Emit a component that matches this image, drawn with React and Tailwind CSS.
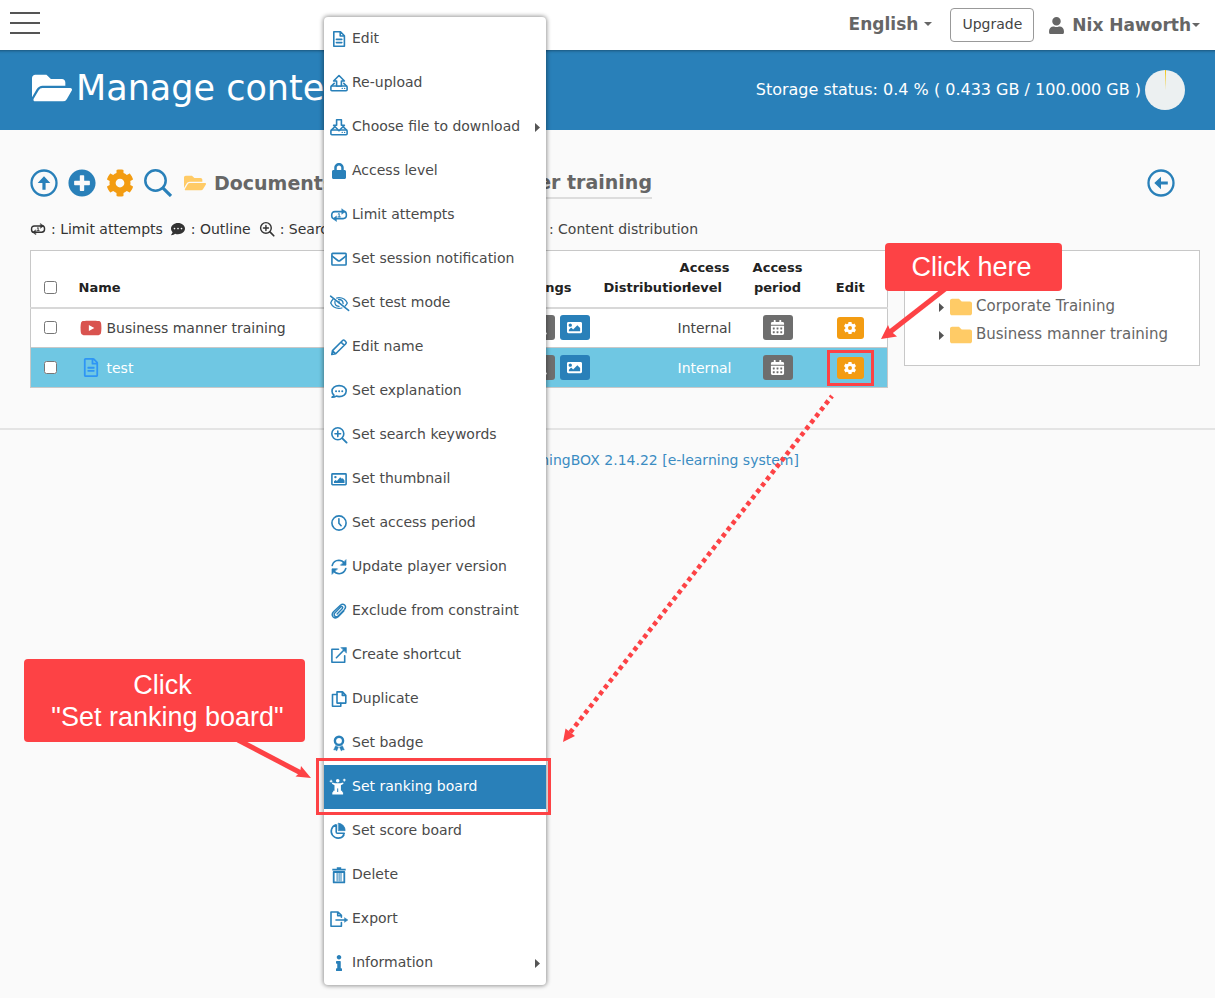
import React from "react";
import { FaFolderOpen, FaFolder, FaUser, FaCog, FaYoutube, FaRegFileAlt, FaLock, FaCommentDots, FaImage, FaCalendarAlt, FaPlusCircle, FaInfo, FaSearch } from "react-icons/fa";

function Svg({ children, className = "h-[18px] w-[18px]", box = "0 0 18 18" }) {
  return (
    <svg aria-hidden="true" viewBox={box} className={"shrink-0 overflow-visible " + className} fill="none" stroke="currentColor" strokeWidth="1.6" strokeLinecap="round" strokeLinejoin="round">
      {children}
    </svg>
  );
}

const FileIcon = () => (
  <Svg>
    <path d="M3.8 1.8h6.7l3.9 3.9v10.5H3.8z M10.2 2v4h4" />
    <path d="M6.4 9.4h5.4M6.4 12.6h5.4" />
  </Svg>
);
const TrayBase = () => (
  <>
    <path d="M4.2 9.300 1.400 12M13.800 9.300 16.600 12" />
    <rect x="0.900" y="12" width="16.200" height="4.700" rx="1" />
    <path d="M12.200 14.400h.1M14.600 14.400h.1" strokeWidth="1.300" />
  </>
);
const UploadIcon = () => (
  <Svg>
    <TrayBase />
    <path d="M9 1.500 3.600 7h3v5h4.800V7h3z" fill="#fff" />
  </Svg>
);
const DownloadIcon = () => (
  <Svg>
    <TrayBase />
    <path d="M9 12.800 3.600 7.300h3V1.800h4.800v5.500h3z" fill="#fff" />
  </Svg>
);
const LockIcon = () => <FaLock className="h-4 w-[18px] shrink-0" />;
const LimitIcon = ({ className }) => (
  <Svg className={className}>
    <path d="M4.500 12.800Q1.700 12.800 1.700 9.200T5 5.600h8.200M13.500 5.400Q16.400 5.400 16.400 9t-3.300 3.600H5" />
    <path d="M12 3l3.200 2.500L12 8zM6.200 10.200 3 12.700l3.200 2.500z" fill="currentColor" strokeWidth=".6" />
    <path d="M8.200 8.100 9.200 7.400v3.400M8 10.900h2.400" strokeWidth="1" />
  </Svg>
);
const MailIcon = () => (
  <Svg>
    <rect x="1.900" y="3.400" width="14.200" height="11.600" rx=".7" />
    <path d="m2.200 6.200 5.600 4.300q1.200.9 2.400 0l5.600-4.300" />
  </Svg>
);
const EyeOffIcon = () => (
  <Svg>
    <path d="M0.600 2.200 18.600 16.400" />
    <path d="M3 5.200Q1.500 6.600.7 9q2.500 5.300 8.300 5.400 1.600 0 2.900-.4M6.700 4.100Q7.800 3.700 9 3.700q5.800.1 8.300 5.300-.8 1.900-2.200 3.100" strokeWidth="1.300" />
    <path d="M5 7.100Q4.100 12 9 12.400M8.600 5.500q4.300-.1 4.500 4M9 7.400q-.4 1.400.7 2" strokeWidth="1.300" />
  </Svg>
);
const PencilIcon = () => (
  <Svg>
    <path d="M1.800 16.500 2.500 12.600 12.600 2.500q1-1 2 0l1.200 1.200q1 1 0 2L5.700 15.800zM11 4.100 14.200 7.300M2.600 12.700l3 3" />
  </Svg>
);
const CommentIcon = () => (
  <Svg>
    <path d="M2 15.200q1.500-.8 2-2Q2 11.600 2 9.200C2 6 5 3.600 9.100 3.600s7.100 2.400 7.100 5.500-3 5.500-7.100 5.500q-1.500 0-2.800-.5Q4.500 15.300 2 15.200z" />
    <path d="M6 9.200h.1M9.100 9.200h.1M12.200 9.200h.1" strokeWidth="1.900" />
  </Svg>
);
const ZoomInIcon = ({ className }) => (
  <Svg className={className}>
    <circle cx="7.800" cy="7.800" r="6" />
    <path d="M12.300 12.300 16.600 16.600" strokeWidth="1.900" />
    <path d="M7.800 5v5.600M5 7.800h5.600" />
  </Svg>
);
const ImageIcon = () => (
  <Svg>
    <rect x="1.900" y="3.900" width="14.200" height="10.800" rx=".6" />
    <path d="M4 13v-1.800l1.600-1.100 1.300.8 3.300-3.700 1.600 1.600 1-.5 1.700 2.200V13z" fill="currentColor" stroke="none" />
    <circle cx="5.400" cy="7.100" r="1.200" fill="currentColor" stroke="none" />
  </Svg>
);
const ClockIcon = () => (
  <Svg>
    <circle cx="9" cy="9" r="7.100" />
    <path d="M8.900 4.700v4.500l2.200 2.500" />
  </Svg>
);
const SyncIcon = () => (
  <Svg>
    <path d="M2.200 7.400Q3.700 2.500 8.800 2.300q3.400 0 5.700 3M15.800 10.600q-1.500 4.900-6.600 5.100-3.400 0-5.700-3" />
    <path d="M16 2v5.200h-5.200zM2 16v-5.200h5.200z" fill="currentColor" strokeWidth=".7" />
  </Svg>
);
const ClipIcon = () => (
  <Svg>
    <path strokeWidth="1.400" d="M7.100 12 12.400 6.600q.8-1 0-1.700t-1.700 0L4.800 10.900q-1.400 1.800 0 3.200 1.600 1.300 3.200-.2l6.500-6.500q2.100-2.500.2-4.400-2-1.800-4.300.2L3.500 9.800q-2.500 2.800-.3 5.200 2.400 2.100 5-.3l5.600-5.700" />
  </Svg>
);
const ShortcutIcon = () => (
  <Svg>
    <path d="M8.500 3.200H1.900v13h12.800V9.700M6.400 11.700 14 4" />
    <path d="M11.200 1.600h5.200v5.200z" fill="currentColor" strokeWidth=".6" />
  </Svg>
);
const CopyIcon = () => (
  <Svg>
    <path d="M7 1.900h5.500l3.300 3.300v7.900H7zM12.300 2.100v3.300h3.300" />
    <path d="M6.800 4.500H2.500v11.800h8.300v-3" />
  </Svg>
);
const BadgeIcon = () => (
  <Svg>
    <circle cx="9" cy="6.800" r="4.100" strokeWidth="2.400" />
    <path d="m5.600 11.800-1.900 4.100 2-.1.900 1.300 1.800-3.900zM12.400 11.800l1.900 4.100-2-.1-.9 1.300-1.800-3.900z" fill="currentColor" strokeWidth=".5" />
  </Svg>
);
const RankIcon = () => (
  <Svg>
    <g fill="currentColor" stroke="none">
      <circle cx="7.700" cy="2.700" r="1.800" />
      <path d="M5 5.200h5.400l2.700-.7.400 1.300-2.600 1.400v5.600h1.300v1.400h.9v2.200H2.300v-2.200h.9v-1.400h1.300V7.200L1.900 5.800l.4-1.300z" />
      <path d="M-.3 2.700h2.700v1H-.3zM.6 1.800h1v2.800h-1zM12.900 1.600h2.800v1h-2.800zM13.800.7h1v2.800h-1z" />
    </g>
    <path d="M7.700 10.800v2.800" stroke="#2980b9" strokeWidth="1" />
  </Svg>
);
const PieIcon = () => (
  <Svg>
    <path d="M6 2.700A6.900 6.900 0 1 0 13.800 13.200M6.200 3v7q0 1.300 1.200 1.300h6.800l-1.200 2.600" strokeWidth="1.600" />
    <path d="M8.600 1.200a7.200 7.200 0 0 1 6.500 7.400H8.600z" fill="currentColor" strokeWidth=".8" />
  </Svg>
);
const TrashIcon = () => (
  <Svg>
    <path d="M2.300 3.600h13.400M6.800 2.200h4.400" strokeWidth="1.800" strokeLinecap="butt" />
    <path d="M3.700 6h10.600v10.400H3.700z" strokeWidth="1.800" />
    <path d="M7.100 7v8M9.100 7v8M11 7v8" strokeWidth="1" />
  </Svg>
);
const ExportIcon = () => (
  <Svg>
    <path d="M11.400 12.600v3.600H1V2h7l3.400 3.400v1.900M7.700 2.200v3.500h3.500M6 10h9.500" />
    <path d="m14.800 7.900 3 2.100-3 2.100z" fill="currentColor" strokeWidth=".6" />
  </Svg>
);
const InfoIcon = () => <FaInfo className="h-4 w-[18px] shrink-0" />;

const menu = [
  ["Edit", FileIcon],
  ["Re-upload", UploadIcon],
  ["Choose file to download", DownloadIcon, true],
  ["Access level", LockIcon],
  ["Limit attempts", LimitIcon],
  ["Set session notification", MailIcon],
  ["Set test mode", EyeOffIcon],
  ["Edit name", PencilIcon],
  ["Set explanation", CommentIcon],
  ["Set search keywords", ZoomInIcon],
  ["Set thumbnail", ImageIcon],
  ["Set access period", ClockIcon],
  ["Update player version", SyncIcon],
  ["Exclude from constraint", ClipIcon],
  ["Create shortcut", ShortcutIcon],
  ["Duplicate", CopyIcon],
  ["Set badge", BadgeIcon],
  ["Set ranking board", RankIcon],
  ["Set score board", PieIcon],
  ["Delete", TrashIcon],
  ["Export", ExportIcon],
  ["Information", InfoIcon, true],
];

function ContextMenu() {
  return (
    <ul role="menu" className="absolute left-[324px] top-[17px] z-10 w-[222px] rounded-sm bg-white shadow-[0_0_4px_1px_rgba(0,0,0,0.4)]">
      {menu.map(([label, Icon, sub]) => {
        const active = label === "Set ranking board";
        return (
          <li key={label} role="none">
            <button role="menuitem" className={"flex h-11 w-full items-center gap-1 whitespace-nowrap px-1.5 text-left " + (active ? "bg-[#2980b9] text-white" : "text-[#4a4a4a]")}>
              <span className={active ? "text-white" : "text-[#2980b9]"}>
                <Icon />
              </span>
              <span className="grow pb-0.5">{label}</span>
              {sub && <Caret />}
            </button>
          </li>
        );
      })}
    </ul>
  );
}

const Caret = () => (
  <svg aria-hidden="true" viewBox="0 0 5 9" className="h-[9px] w-[5px] shrink-0" fill="#555">
    <path d="M0 0 5 4.500 0 9z" />
  </svg>
);
const DownCaret = () => (
  <svg aria-hidden="true" viewBox="0 0 8 4" className="h-1 w-2 shrink-0" fill="#666">
    <path d="M0 0h8L4 4z" />
  </svg>
);

const SmallGear = () => (
  <svg aria-hidden="true" viewBox="0 0 14 14" className="h-3.5 w-3.5" fill="none" stroke="currentColor">
    <circle cx="7" cy="7" r="3.400" strokeWidth="2.800" />
    <path d="M7 .9v2.400M7 10.700v2.400M1.700 3.950l2.100 1.200M10.200 8.850l2.100 1.200M1.700 10.050l2.100-1.200M10.200 5.150l2.100-1.200" strokeWidth="3.200" />
  </svg>
);

const ArrowCircle = ({ left }) => (
  <svg aria-hidden="true" viewBox="0 0 28 28" className="h-7 w-7" fill="none">
    <circle cx="14" cy="14" r="12.500" stroke="#2980b9" strokeWidth="2.300" />
    <path transform={left ? "rotate(-90 14 14)" : undefined} d="M14 7.300 20.300 14h-4.700v6.800h-3.200V14H7.700z" fill="#2980b9" />
  </svg>
);

const rows = [
  { name: "Business manner training", icon: <FaYoutube className="mx-auto h-[22px] w-[22px] text-[#d9534f]" /> },
  { name: "test", selected: true, icon: <FaRegFileAlt className="mx-auto h-[19px] w-4 text-[#2e95f5]" /> },
];

function ContentTable() {
  const head = "align-bottom px-0 pb-[9px] text-[13px] leading-5 font-bold text-[#222]";
  return (
    <div className="min-w-0 flex-1">
      <table className="w-full table-fixed border-collapse border border-[#c8c8c8] bg-white text-[#444]">
        <colgroup>
          <col className="w-10" />
          <col />
          <col className="w-[130px]" />
          <col className="w-[72px]" />
          <col className="w-[74px]" />
          <col className="w-[72px]" />
          <col className="w-[74px]" />
        </colgroup>
        <thead>
          <tr className="h-[57px] border-b-2 border-[#d8d8d8]">
            <th className={head}>
              <input type="checkbox" aria-label="Select all" className="mx-auto mb-1 block h-[13px] w-[13px]" />
            </th>
            <th className={head}><span className="block pl-2 text-left">Name</span></th>
            <th className={head}><span className="block pr-6 text-right">Settings</span></th>
            <th className={head}><span className="block whitespace-nowrap pl-2 text-left">Distribution</span></th>
            <th className={head}>Access<br />level</th>
            <th className={head}>Access<br />period</th>
            <th className={head}>Edit</th>
          </tr>
        </thead>
        <tbody>
          {rows.map((r) => (
            <tr key={r.name} className={"h-10 border-b border-[#c8c8c8] " + (r.selected ? "bg-[#6fc7e3] text-white" : "")}>
              <td>
                <input type="checkbox" aria-label={"Select " + r.name} className="mx-auto block h-[13px] w-[13px]" />
              </td>
              <td className="pl-2">
                <div className="flex items-center gap-1 whitespace-nowrap">
                  <span className="w-6">{r.icon}</span>
                  <a href="#content">{r.name}</a>
                </div>
              </td>
              <td>
                <div className="flex justify-end gap-[5px] pr-1.5">
                  <button aria-label="Search keywords" className="flex h-[25px] w-[30px] items-center justify-center rounded-[3px] bg-[#6e6e6e] text-white"><FaSearch size={14} /></button>
                  <button aria-label="Thumbnail" className="flex h-[25px] w-[30px] items-center justify-center rounded-[3px] bg-[#2980b9] text-white"><FaImage size={15} /></button>
                </div>
              </td>
              <td />
              <td className="text-center">Internal</td>
              <td>
                <button aria-label="Access period" className="mx-auto flex h-[25px] w-[30px] items-center justify-center rounded-[3px] bg-[#6e6e6e] text-white"><FaCalendarAlt size={15} /></button>
              </td>
              <td>
                <button aria-label="Edit" className="mx-auto flex h-[22px] w-[27px] items-center justify-center rounded-[3px] bg-[#f39c12] text-white"><SmallGear /></button>
              </td>
            </tr>
          ))}
        </tbody>
      </table>
    </div>
  );
}

function Annotations() {
  return (
    <>
      <svg aria-hidden="true" viewBox="0 0 1215 998" className="pointer-events-none absolute left-0 top-0 z-20 h-[998px] w-[1215px]" fill="none" stroke="#fd4245">
        <rect x="317.500" y="759.500" width="232" height="54" strokeWidth="3" />
        <rect x="828.500" y="351.500" width="44" height="33" strokeWidth="3" />
        <path d="M945 289 890 332" strokeWidth="5" />
        <path d="m881 339 7-14 2.500 6 6.500 5.500z" fill="#fd4245" stroke="none" />
        <path d="M238 740 301 773" strokeWidth="5" />
        <path d="m311 778-15.500-1.500 4.500-4 1-6.500z" fill="#fd4245" stroke="none" />
        <path d="M832 396 569 734" strokeWidth="4.600" strokeDasharray="4.300 3.700" strokeDashoffset="2" />
        <path d="m563 742 2.500-13.500L575 736z" fill="#fd4245" stroke="none" />
      </svg>
      <div className="absolute left-[885px] top-[243px] z-20 flex h-12 w-[177px] items-center justify-center rounded bg-[#fd4245] pr-1 font-['Liberation_Sans',sans-serif] text-[27px] text-white">Click here</div>
      <div className="absolute left-[24px] top-[659px] z-20 h-[83px] w-[281px] rounded bg-[#fd4245] pt-2.5 font-['Liberation_Sans',sans-serif] text-[27px] leading-8 text-white">
        <p className="pr-1 text-center">Click</p>
        <p className="pl-1.5 text-center">"Set ranking board"</p>
      </div>
    </>
  );
}

export default function App() {
  return (
    <div className="relative min-h-screen bg-[#fafafa] font-['DejaVu_Sans',sans-serif] text-sm text-[#444]">
      <header className="flex h-[50px] items-center bg-white px-2.5">
        <button aria-label="Menu" className="mb-1 flex w-[30px] flex-col gap-2">
          <span className="h-0.5 bg-[#555]" />
          <span className="h-0.5 bg-[#555]" />
          <span className="h-0.5 bg-[#555]" />
        </button>
        <nav className="ml-auto flex items-center pr-[5px] text-[17px] font-bold text-[#666]">
          <button className="mr-[18px] flex items-center gap-1.5 pb-0.5">English <DownCaret /></button>
          <button className="mr-3.5 h-[34px] w-[84px] rounded border border-[#999] bg-white pb-0.5 text-sm font-normal text-[#444]">Upgrade</button>
          <button className="flex items-center gap-px"><FaUser className="mr-1.5" size={17} />Nix Haworth<DownCaret /></button>
        </nav>
      </header>

      <div className="flex h-20 items-center justify-between bg-[#2980b9] pl-8 pr-[30px] text-white shadow-[inset_0_4px_3px_-3px_rgba(0,0,0,0.35)]">
        <h1 className="flex items-center gap-1 pb-1 text-[35px]"><FaFolderOpen className="h-10 w-10" />Manage contents</h1>
        <div className="flex items-center gap-1 text-base">
          <span>Storage status: 0.4 % ( 0.433 GB / 100.000 GB )</span>
          <svg aria-hidden="true" viewBox="0 0 40 40" className="h-10 w-10">
            <circle cx="20" cy="20" r="20" fill="#ecf0f1" />
            <path d="M20 20V0h1z" fill="#f1c40f" />
          </svg>
        </div>
      </div>

      <main className="pl-[30px] pr-[15px]">
        <div className="flex items-center pt-[37px]">
          <div className="flex items-center gap-2.5">
            <button aria-label="Up"><ArrowCircle /></button>
            <button aria-label="Add"><FaPlusCircle className="h-7 w-7 text-[#2980b9]" /></button>
            <button aria-label="Settings"><FaCog className="h-7 w-7 text-[#f39c12]" /></button>
            <button aria-label="Search">
              <svg aria-hidden="true" viewBox="0 0 28 28" className="h-7 w-7" fill="none" stroke="#2980b9" strokeWidth="2.500">
                <circle cx="11.500" cy="11.500" r="10.200" />
                <path d="M18.800 18.800 27 27" strokeWidth="3.200" />
              </svg>
            </button>
          </div>
          <FaFolderOpen className="ml-3 h-6 w-[22px] text-[#ffcb66]" />
          <div className="ml-2 flex w-[438px] justify-between whitespace-nowrap text-[19px] font-bold text-[#666]">
            <a href="#documents" className="leading-8">Documents</a>
            <a href="#business" className="border-b-2 border-[#ddd] leading-[30px]">Business manner training</a>
          </div>
          <button aria-label="Back" className="ml-auto mr-[25px]"><ArrowCircle left /></button>
        </div>

        <div className="flex h-[51px] w-[668px] items-center justify-between pt-2">
          <div className="flex items-center gap-2 whitespace-nowrap text-[#333]">
            <span className="flex items-center gap-[5px]"><LimitIcon className="h-4 w-4" />: Limit attempts</span>
            <span className="flex items-center gap-[5px]"><FaCommentDots className="mr-px" size={14} />: Outline</span>
            <span className="flex items-center gap-[5px]"><ZoomInIcon className="h-4 w-4" />: Search</span>
          </div>
          <span>: Content distribution</span>
        </div>

        <div className="flex items-start gap-4">
          <ContentTable />
          <aside className="h-[116px] w-[296px] border border-[#c8c8c8] bg-white pl-[34px] pt-[42px] text-[15px] text-[#666]">
            <ul>
              {["Corporate Training", "Business manner training"].map((t) => (
                <li key={t} className="flex h-7 items-center gap-1.5 whitespace-nowrap">
                  <Caret />
                  <a href="#folder" className="flex items-center gap-1"><FaFolder size={22} className="text-[#ffcb66]" />{t}</a>
                </li>
              ))}
            </ul>
          </aside>
        </div>
      </main>

      <footer className="mt-10 border-t-2 border-[#e4e4e4] pl-3 pt-5 text-center leading-5 text-[#3b8cc2]">
        <a href="#about">Powered by learningBOX 2.14.22 [e-learning system]</a>
      </footer>

      <ContextMenu />
      <Annotations />
    </div>
  );
}
